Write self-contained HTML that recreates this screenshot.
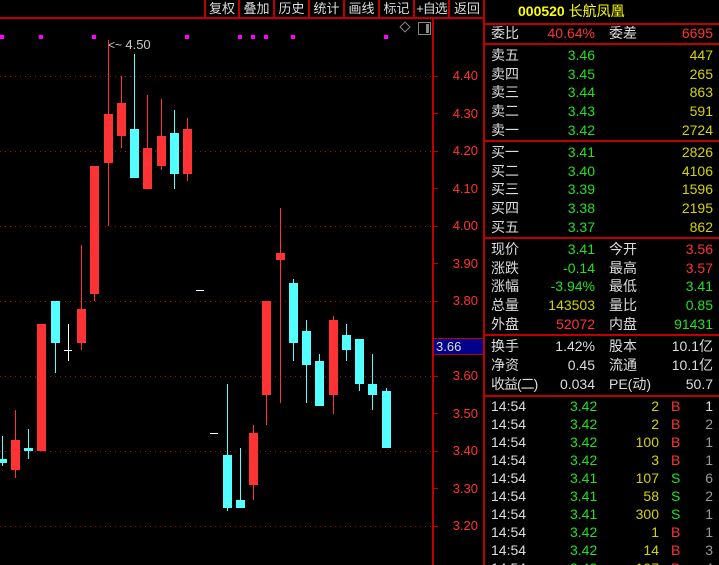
<!DOCTYPE html>
<html><head><meta charset="utf-8"><style>
*{margin:0;padding:0;box-sizing:border-box}
html{width:719px;height:565px;overflow:hidden;background:#000}
body{width:719px;height:565px;background:#000;position:relative;overflow:hidden;font-family:"Liberation Sans","Noto Sans CJK SC",sans-serif;font-size:14px}
div,span{position:absolute;white-space:nowrap}
.r{background:#ff3333}.c{background:#54ffff}.w{background:#fff}
.g{left:0;width:433px;height:1px;background:repeating-linear-gradient(90deg,#c00000 0 1px,transparent 1px 5px)}
.t{left:433px;width:5px;height:1px;background:#c00000}
.al{left:440px;width:38px;text-align:right;color:#ff3333;font-size:13px;line-height:14px}
.tb{top:0;height:18px;color:#ddd;font-size:13px;line-height:17px;text-align:center;border-left:2px solid #c00000}
.hl{left:485px;width:234px;height:2px;background:#c00000}
.row{left:485px;width:234px;height:19px;line-height:19px;font-size:14px}
.row span{top:0}
.l1{left:6px;color:#ddd}.l2{left:124px;color:#ddd}
.v1{right:124px;text-align:right}.v2{right:6px;text-align:right}
.gr{color:#22e022}.ye{color:#d4d400}.rd{color:#ff3333}.wh{color:#ddd}.gy{color:#999}
.m{width:4px;height:4px;background:#f0f;top:35px}
</style></head><body>
<div style="left:0;top:17px;width:485px;height:2px;background:#c00000"></div>
<div class="tb" style="left:204px;width:34px">复权</div>
<div class="tb" style="left:238px;width:35px">叠加</div>
<div class="tb" style="left:273px;width:35px">历史</div>
<div class="tb" style="left:308px;width:35px">统计</div>
<div class="tb" style="left:343px;width:35px">画线</div>
<div class="tb" style="left:378px;width:35px">标记</div>
<div class="tb" style="left:413px;width:35px;letter-spacing:-1px">+自选</div>
<div class="tb" style="left:448px;width:36px">返回</div>
<div style="left:432px;top:18px;width:2px;height:547px;background:#c00000"></div>
<div style="left:483px;top:0;width:2px;height:565px;background:#c00000"></div>
<div style="left:401px;top:23px;width:8px;height:8px;border:1px solid #888;transform:rotate(45deg)"></div>
<div style="left:418px;top:22px;width:13px;height:13px;border:1px solid #888"></div>
<div style="left:426px;top:24px;width:3px;height:9px;background:#888"></div>
<div class="m" style="left:0"></div><div class="m" style="left:39px"></div><div class="m" style="left:92px"></div><div class="m" style="left:185px"></div><div class="m" style="left:238px"></div><div class="m" style="left:251px"></div><div class="m" style="left:264px"></div><div class="m" style="left:291px"></div><div class="m" style="left:384px"></div>
<div class="g" style="top:76px"></div><div class="g" style="top:151px"></div><div class="g" style="top:226px"></div><div class="g" style="top:301px"></div><div class="g" style="top:376px"></div><div class="g" style="top:451px"></div><div class="g" style="top:526px"></div>
<div class="t" style="top:76px"></div><div class="t" style="top:113px"></div><div class="t" style="top:151px"></div><div class="t" style="top:188px"></div><div class="t" style="top:226px"></div><div class="t" style="top:263px"></div><div class="t" style="top:301px"></div><div class="t" style="top:376px"></div><div class="t" style="top:413px"></div><div class="t" style="top:451px"></div><div class="t" style="top:488px"></div><div class="t" style="top:526px"></div>
<div class="al" style="top:69px">4.40</div><div class="al" style="top:107px">4.30</div><div class="al" style="top:144px">4.20</div><div class="al" style="top:182px">4.10</div><div class="al" style="top:219px">4.00</div><div class="al" style="top:257px">3.90</div><div class="al" style="top:294px">3.80</div><div class="al" style="top:369px">3.60</div><div class="al" style="top:407px">3.50</div><div class="al" style="top:444px">3.40</div><div class="al" style="top:482px">3.30</div><div class="al" style="top:519px">3.20</div>
<div style="left:433px;top:338px;width:51px;height:17px;background:#00008b;border:1px solid #c00000;color:#ddd;font-size:13px;line-height:15px;padding-left:2px">3.66</div>
<div style="left:108px;top:37px;color:#ccc;font-size:12px">&lt;~ <span style="position:static;font-size:13px">4.50</span></div>
<div class="c" style="left:2px;top:436px;width:1px;height:30px"></div><div class="c" style="left:0;top:459px;width:7px;height:4px"></div>
<div class="r" style="left:15px;top:410px;width:1px;height:68px"></div><div class="r" style="left:11px;top:440px;width:9px;height:30px"></div>
<div class="c" style="left:28px;top:429px;width:1px;height:30px"></div><div class="c" style="left:24px;top:448px;width:9px;height:3px"></div>
<div class="r" style="left:37px;top:324px;width:9px;height:127px"></div>
<div class="c" style="left:55px;top:343px;width:1px;height:30px"></div><div class="c" style="left:51px;top:301px;width:9px;height:42px"></div>
<div class="w" style="left:68px;top:324px;width:1px;height:37px"></div><div class="w" style="left:64px;top:350px;width:8px;height:1px"></div>
<div class="r" style="left:81px;top:245px;width:1px;height:105px"></div><div class="r" style="left:77px;top:309px;width:9px;height:34px"></div>
<div class="r" style="left:94px;top:294px;width:1px;height:7px"></div><div class="r" style="left:90px;top:166px;width:9px;height:128px"></div>
<div class="r" style="left:108px;top:40px;width:1px;height:186px"></div><div class="r" style="left:104px;top:114px;width:9px;height:49px"></div>
<div class="r" style="left:121px;top:76px;width:1px;height:72px"></div><div class="r" style="left:117px;top:103px;width:9px;height:33px"></div>
<div class="c" style="left:134px;top:54px;width:1px;height:124px"></div><div class="c" style="left:130px;top:129px;width:9px;height:49px"></div>
<div class="r" style="left:147px;top:95px;width:1px;height:94px"></div><div class="r" style="left:143px;top:148px;width:9px;height:41px"></div>
<div class="r" style="left:161px;top:99px;width:1px;height:71px"></div><div class="r" style="left:157px;top:136px;width:9px;height:30px"></div>
<div class="c" style="left:174px;top:110px;width:1px;height:79px"></div><div class="c" style="left:170px;top:133px;width:9px;height:41px"></div>
<div class="r" style="left:187px;top:118px;width:1px;height:63px"></div><div class="r" style="left:183px;top:129px;width:9px;height:45px"></div>
<div class="w" style="left:196px;top:290px;width:8px;height:1px"></div>
<div class="w" style="left:210px;top:433px;width:8px;height:1px"></div>
<div class="c" style="left:227px;top:384px;width:1px;height:127px"></div><div class="c" style="left:223px;top:455px;width:9px;height:53px"></div>
<div class="c" style="left:240px;top:448px;width:1px;height:60px"></div><div class="c" style="left:236px;top:500px;width:9px;height:8px"></div>
<div class="r" style="left:253px;top:425px;width:1px;height:75px"></div><div class="r" style="left:249px;top:433px;width:9px;height:52px"></div>
<div class="r" style="left:266px;top:395px;width:1px;height:30px"></div><div class="r" style="left:262px;top:301px;width:9px;height:94px"></div>
<div class="r" style="left:280px;top:208px;width:1px;height:195px"></div><div class="r" style="left:276px;top:253px;width:9px;height:7px"></div>
<div class="c" style="left:293px;top:279px;width:1px;height:82px"></div><div class="c" style="left:289px;top:283px;width:9px;height:60px"></div>
<div class="c" style="left:306px;top:320px;width:1px;height:83px"></div><div class="c" style="left:302px;top:331px;width:9px;height:34px"></div>
<div class="c" style="left:319px;top:354px;width:1px;height:52px"></div><div class="c" style="left:315px;top:361px;width:9px;height:45px"></div>
<div class="r" style="left:333px;top:316px;width:1px;height:98px"></div><div class="r" style="left:329px;top:320px;width:9px;height:75px"></div>
<div class="c" style="left:346px;top:324px;width:1px;height:37px"></div><div class="c" style="left:342px;top:335px;width:9px;height:15px"></div>
<div class="c" style="left:359px;top:384px;width:1px;height:7px"></div><div class="c" style="left:355px;top:339px;width:9px;height:45px"></div>
<div class="c" style="left:372px;top:354px;width:1px;height:56px"></div><div class="c" style="left:368px;top:384px;width:9px;height:11px"></div>
<div class="c" style="left:386px;top:388px;width:1px;height:60px"></div><div class="c" style="left:382px;top:391px;width:9px;height:57px"></div>
<div style="left:485px;top:0;width:234px;height:18px;color:#ffff00;font-size:14px;line-height:22px;padding-left:33px;font-weight:bold">000520 <span style="position:static;font-weight:normal">长航凤凰</span></div>
<div class="hl" style="top:23px"></div><div class="hl" style="top:43px"></div><div class="hl" style="top:140px"></div><div class="hl" style="top:237px"></div><div class="hl" style="top:334px"></div><div class="hl" style="top:395px"></div>
<div class="row" style="top:24px"><span class="l1">委比</span><span class="v1 rd">40.64%</span><span class="l2">委差</span><span class="v2 rd">6695</span></div>
<div class="row" style="top:46px"><span class="l1">卖五</span><span class="v1 gr">3.46</span><span class="v2 ye">447</span></div>
<div class="row" style="top:65px"><span class="l1">卖四</span><span class="v1 gr">3.45</span><span class="v2 ye">265</span></div>
<div class="row" style="top:83px"><span class="l1">卖三</span><span class="v1 gr">3.44</span><span class="v2 ye">863</span></div>
<div class="row" style="top:102px"><span class="l1">卖二</span><span class="v1 gr">3.43</span><span class="v2 ye">591</span></div>
<div class="row" style="top:121px"><span class="l1">卖一</span><span class="v1 gr">3.42</span><span class="v2 ye">2724</span></div>
<div class="row" style="top:143px"><span class="l1">买一</span><span class="v1 gr">3.41</span><span class="v2 ye">2826</span></div>
<div class="row" style="top:162px"><span class="l1">买二</span><span class="v1 gr">3.40</span><span class="v2 ye">4106</span></div>
<div class="row" style="top:180px"><span class="l1">买三</span><span class="v1 gr">3.39</span><span class="v2 ye">1596</span></div>
<div class="row" style="top:199px"><span class="l1">买四</span><span class="v1 gr">3.38</span><span class="v2 ye">2195</span></div>
<div class="row" style="top:218px"><span class="l1">买五</span><span class="v1 gr">3.37</span><span class="v2 ye">862</span></div>
<div class="row" style="top:240px"><span class="l1">现价</span><span class="v1 gr">3.41</span><span class="l2">今开</span><span class="v2 rd">3.56</span></div>
<div class="row" style="top:259px"><span class="l1">涨跌</span><span class="v1 gr">-0.14</span><span class="l2">最高</span><span class="v2 rd">3.57</span></div>
<div class="row" style="top:277px"><span class="l1">涨幅</span><span class="v1 gr">-3.94%</span><span class="l2">最低</span><span class="v2 gr">3.41</span></div>
<div class="row" style="top:296px"><span class="l1">总量</span><span class="v1 ye">143503</span><span class="l2">量比</span><span class="v2 gr">0.85</span></div>
<div class="row" style="top:315px"><span class="l1">外盘</span><span class="v1 rd">52072</span><span class="l2">内盘</span><span class="v2 gr">91431</span></div>
<div class="row" style="top:337px"><span class="l1">换手</span><span class="v1 wh">1.42%</span><span class="l2">股本</span><span class="v2 wh">10.1亿</span></div>
<div class="row" style="top:356px"><span class="l1">净资</span><span class="v1 wh">0.45</span><span class="l2">流通</span><span class="v2 wh">10.1亿</span></div>
<div class="row" style="top:375px"><span class="l1" style="letter-spacing:-1px">收益(二)</span><span class="v1 wh">0.034</span><span class="l2">PE(动)</span><span class="v2 wh">50.7</span></div>
<div class="row" style="top:397px"><span class="l1">14:54</span><span class="gr" style="left:85px">3.42</span><span class="ye" style="right:60px">2</span><span class="rd" style="left:186px">B</span><span class="wh" style="right:6px">1</span></div>
<div class="row" style="top:415px"><span class="l1">14:54</span><span class="gr" style="left:85px">3.42</span><span class="ye" style="right:60px">2</span><span class="rd" style="left:186px">B</span><span class="gy" style="right:6px">2</span></div>
<div class="row" style="top:433px"><span class="l1">14:54</span><span class="gr" style="left:85px">3.42</span><span class="ye" style="right:60px">100</span><span class="rd" style="left:186px">B</span><span class="gy" style="right:6px">1</span></div>
<div class="row" style="top:451px"><span class="l1">14:54</span><span class="gr" style="left:85px">3.42</span><span class="ye" style="right:60px">3</span><span class="rd" style="left:186px">B</span><span class="gy" style="right:6px">1</span></div>
<div class="row" style="top:469px"><span class="l1">14:54</span><span class="gr" style="left:85px">3.41</span><span class="ye" style="right:60px">107</span><span class="gr" style="left:186px">S</span><span class="gy" style="right:6px">6</span></div>
<div class="row" style="top:487px"><span class="l1">14:54</span><span class="gr" style="left:85px">3.41</span><span class="ye" style="right:60px">58</span><span class="gr" style="left:186px">S</span><span class="gy" style="right:6px">2</span></div>
<div class="row" style="top:505px"><span class="l1">14:54</span><span class="gr" style="left:85px">3.41</span><span class="ye" style="right:60px">300</span><span class="gr" style="left:186px">S</span><span class="gy" style="right:6px">1</span></div>
<div class="row" style="top:523px"><span class="l1">14:54</span><span class="gr" style="left:85px">3.42</span><span class="ye" style="right:60px">1</span><span class="rd" style="left:186px">B</span><span class="gy" style="right:6px">1</span></div>
<div class="row" style="top:541px"><span class="l1">14:54</span><span class="gr" style="left:85px">3.42</span><span class="ye" style="right:60px">14</span><span class="rd" style="left:186px">B</span><span class="gy" style="right:6px">3</span></div>
<div class="row" style="top:559px"><span class="l1">14:54</span><span class="gr" style="left:85px">3.42</span><span class="ye" style="right:60px">107</span><span class="rd" style="left:186px">B</span><span class="gy" style="right:6px">4</span></div>
</body></html>
